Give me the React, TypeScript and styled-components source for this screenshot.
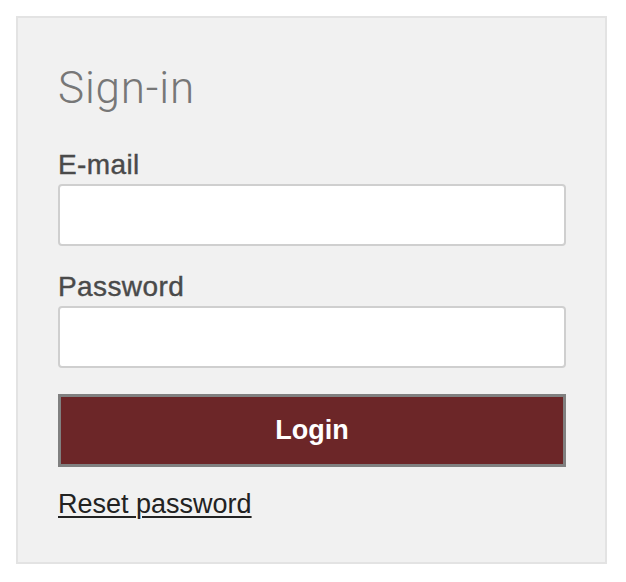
import React from "react";
import styled, { createGlobalStyle } from "styled-components";

const Global = createGlobalStyle`
  html, body { margin: 0; padding: 0; background: #ffffff; }
  body { font-family: "Liberation Sans", Arial, sans-serif; }
  * { box-sizing: border-box; }
`;

const Panel = styled.form`
  margin: 16px;
  width: 591px;
  height: 548px;
  background: #f1f1f1;
  border: 2px solid #e3e3e3;
  padding: 45px 39px 0 40px;
  display: flex;
  flex-direction: column;
`;

const Title = styled.h1`
  margin: 0 0 37px 0;
  font-family: Roboto, "Liberation Sans", sans-serif;
  font-weight: 300;
  font-size: 44px;
  letter-spacing: 0.8px;
  line-height: 50px;
  color: #777777;
`;

const Label = styled.label<{ $gap?: number }>`
  display: block;
  margin: ${(p) => p.$gap ?? 0}px 0 4px 0;
  font-family: "Liberation Sans", Arial, sans-serif;
  font-size: 28px;
  letter-spacing: 0.4px;
  line-height: 30px;
  color: #4a4a4a;
  -webkit-text-stroke: 0.4px #4a4a4a;
`;

const Input = styled.input`
  display: block;
  width: 508px;
  height: 62px;
  border: 2px solid #cfcfcf;
  border-radius: 4px;
  background: #ffffff;
  font-size: 22px;
  padding: 0 12px;
  outline: none;
`;

const Button = styled.button`
  margin-top: 26px;
  width: 508px;
  height: 73px;
  background: #6c2628;
  border: 3px solid #808080;
  color: #ffffff;
  font-family: "Liberation Sans", Arial, sans-serif;
  font-weight: 700;
  font-size: 27px;
  cursor: pointer;
`;

const ResetLink = styled.a`
  margin-top: 22px;
  align-self: flex-start;
  font-family: "Liberation Sans", Arial, sans-serif;
  font-size: 27px;
  line-height: 30px;
  color: #222222;
  text-decoration: underline;
  text-decoration-thickness: 2px;
  text-underline-offset: 3px;
`;

export default function App() {
  return (
    <>
      <Global />
      <Panel onSubmit={(e) => e.preventDefault()}>
        <Title>Sign-in</Title>
        <Label htmlFor="email">E-mail</Label>
        <Input id="email" type="email" />
        <Label htmlFor="password" $gap={26}>Password</Label>
        <Input id="password" type="password" />
        <Button type="submit">Login</Button>
        <ResetLink href="#">Reset password</ResetLink>
      </Panel>
    </>
  );
}
